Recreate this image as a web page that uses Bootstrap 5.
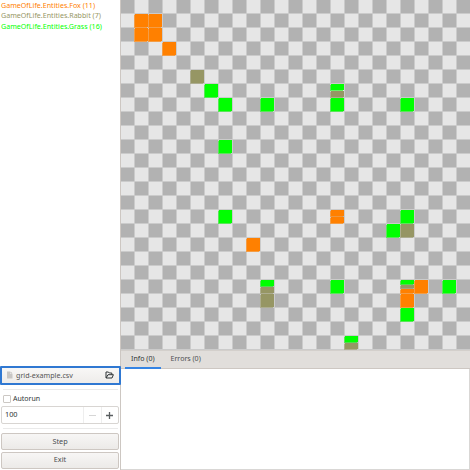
<!DOCTYPE html>
<html lang="en">
<head>
<meta charset="utf-8">
<title>Game of Life</title>
<link href="https://cdn.jsdelivr.net/npm/bootstrap@5.3.0/dist/css/bootstrap.min.css" rel="stylesheet">
<style>
body{width:470px;height:470px;font:7px/10px "Noto Sans","Open Sans",sans-serif;color:#2e3436;background:#fff}
.side{width:120px}
.legend{font-size:7.12px;line-height:10.4px;padding:0 0 0 1px;white-space:nowrap}
.fox-text{color:#ff8000}.rabbit-text{color:#969664}.grass-text{color:#0f0}
.main-pane{width:350px;border-left:1px solid #cdc7c2}
.board{height:350px;background:#cbcbcb;display:grid;grid-template:repeat(25,13px)/repeat(25,13px);gap:1px;overflow:hidden}
.cell{background:#e6e6e6;display:flex;flex-direction:column;gap:1px;position:relative}
.cell.dark{background:#b2b2b2}
.unit{flex:1 1 0;position:relative}
.fox{background:#ff8000;box-shadow:-1px 1px #ff9020c8}
.rabbit{background:#969664;box-shadow:-1px 1px #96966490}
.grass{background:#0f0;box-shadow:-1px 1px #00ff0090}
.tabs-bar{height:19px;background:#e1dedb;border-top:1px solid #d3cfcb;border-bottom:1px solid #cdc7c2;padding-left:4px}
.tab{border:0;border-bottom:2px solid transparent;background:none;height:18px;padding:0 6px 1px;font-size:7.05px;line-height:15px;color:#4d5052;white-space:nowrap}
.tab.active{border-bottom-color:#3584e4;color:#2e3436;position:relative}
.log{border-right:1px solid #d9d7d5;border-bottom:1px solid #d9d7d5}
.file-btn{height:19px;border:2px solid #2f78d2;border-radius:1px;background:linear-gradient(#f8f7f6,#eeecea);padding:0 5px 1px 4px;font-size:7.15px;color:#555;width:121px;position:relative}
.file-name{padding-left:3px}
.rule{height:1px;background:#eaeaea;margin:4px 2px 0 3px}
.rule.low{margin-bottom:4px}
.auto-row{height:16px;padding:1px 0 0 3px;gap:2px}
.check-box{width:8px;height:8px;border:1px solid #ccc8c4;border-radius:1px;background:#fff}
.spin{height:18px;border:1px solid #d8d5d2;border-radius:2px;margin:0 1px;font-size:7.3px}
.spin .amount{padding:0 0 2px 3px}
.spin .part{width:17.5px;border-left:1px solid #eee;height:100%}
.push{height:17px;border:1px solid #cdc7c2;border-radius:2px;background:linear-gradient(#f7f6f5,#eceae8);font-size:7.3px;line-height:14px;padding:0 0 1px;margin:0 1px;color:#4a4e50}
.push.last{margin-top:2px;margin-bottom:1px;line-height:13px;padding-bottom:2px}
</style>
</head>
<body class="d-flex overflow-hidden m-0">
<aside class="side d-flex flex-column flex-shrink-0">
  <div class="legend flex-grow-1">
    <div class="fox-text">GameOfLife.Entities.Fox (11)</div>
    <div class="rabbit-text">GameOfLife.Entities.Rabbit (7)</div>
    <div class="grass-text">GameOfLife.Entities.Grass (16)</div>
  </div>
  <div class="file-btn d-flex align-items-center flex-shrink-0">
    <svg width="7" height="8" viewBox="0 0 7 8"><path d="M1 .5h3v2.6h2.5V7.5H1z" fill="#c8c6c4"/><path d="M4.5.5l2 2h-2z" fill="#b5b3b1"/></svg>
    <span class="file-name flex-grow-1">grid-example.csv</span>
    <svg width="9" height="8" viewBox="0 0 9 8" fill="none" stroke="#2e3436"><path d="M1 6.9V1h2.4l.9 1H6.8v1.6M1.1 7l1.9-3.3h5.4L7 7z" stroke-linejoin="round"/></svg>
  </div>
  <div class="rule"></div>
  <label class="auto-row d-flex align-items-center"><span class="check-box"></span><span>Autorun</span></label>
  <div class="spin d-flex align-items-center">
    <span class="amount flex-grow-1">100</span>
    <span class="part d-flex align-items-center justify-content-center"><svg width="7" height="8"><path d="M0 4.5h7" stroke="#d6d6d6"/></svg></span>
    <span class="part d-flex align-items-center justify-content-center"><svg width="7" height="8"><path d="M0 4.5h7M3.5 1v7" stroke="#5a5e60" stroke-width="1.3"/></svg></span>
  </div>
  <div class="rule low"></div>
  <button class="push">Step</button>
  <button class="push last">Exit</button>
</aside>
<main class="main-pane d-flex flex-column flex-shrink-0">
  <div class="board flex-shrink-0" id="board"></div>
  <div class="tabs-bar d-flex flex-shrink-0">
    <button class="tab active">Info (0)</button>
    <button class="tab ms-1">Errors (0)</button>
  </div>
  <div class="log flex-grow-1"></div>
</main>
<script src="https://cdn.jsdelivr.net/npm/bootstrap@5.3.0/dist/js/bootstrap.bundle.min.js"></script>
<script>
const names={f:'fox',r:'rabbit',g:'grass'};
const units={'1,1':'f','2,1':'f','1,2':'f','2,2':'f','3,3':'f','5,5':'r','6,6':'g','15,6':'gr','7,7':'g','10,7':'g','15,7':'g','20,7':'g','7,10':'g','7,15':'g','15,15':'ff','20,15':'g','19,16':'g','20,16':'r','9,17':'f','10,20':'gr','15,20':'g','20,20':'grf','21,20':'f','23,20':'g','10,21':'r','20,21':'f','20,22':'g','16,24':'gr'};
const board=document.getElementById('board');
for(let y=0;y<25;y++)for(let x=0;x<25;x++){
  const c=document.createElement('div');
  c.className='cell'+((x+y)%2?'':' dark');
  for(const k of units[x+','+y]||''){const u=document.createElement('div');u.className='unit '+names[k];c.append(u);}
  board.append(c);
}
</script>
</body>
</html>
